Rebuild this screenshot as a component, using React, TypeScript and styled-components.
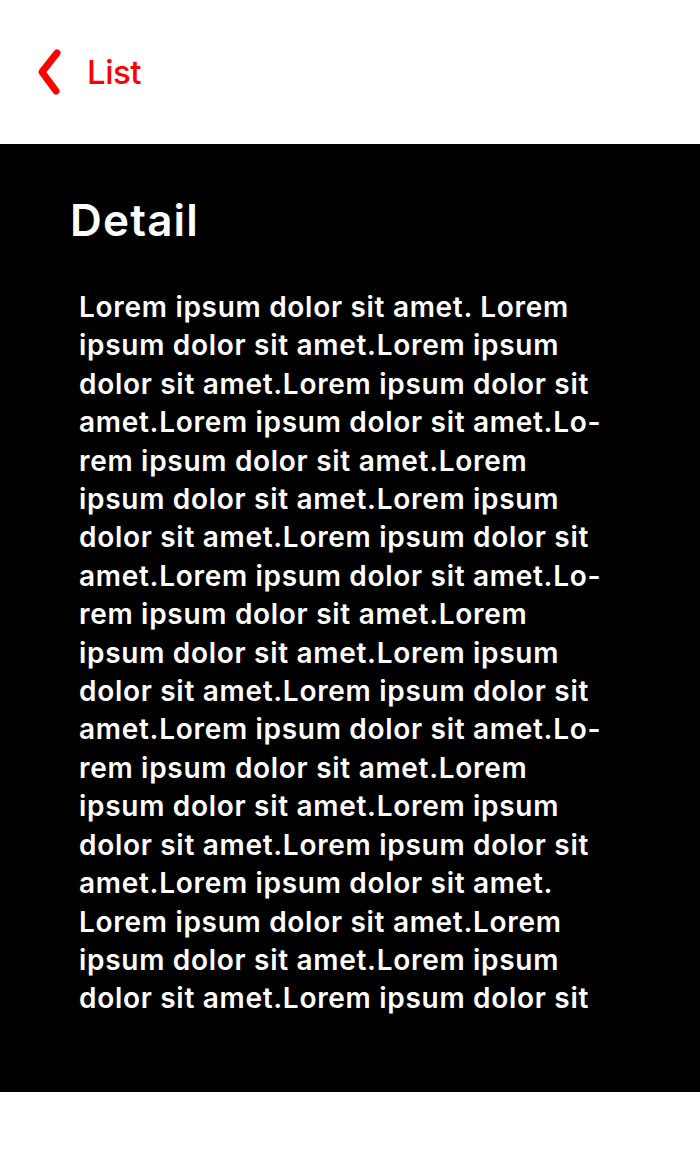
import React from 'react'
import styled, { createGlobalStyle } from 'styled-components'

const GlobalStyle = createGlobalStyle`
  html, body {
    margin: 0;
    padding: 0;
    background: #ffffff;
    font-family: Inter, "Open Sans", sans-serif;
  }
`

const Page = styled.div`
  width: 700px;
  min-height: 1168px;
  background: #ffffff;
`

const TopBar = styled.header`
  height: 144px;
  display: flex;
  align-items: center;
  padding-left: 37px;
  box-sizing: border-box;
`

const BackButton = styled.button`
  display: flex;
  align-items: center;
  gap: 24px;
  border: 0;
  padding: 0;
  background: none;
  color: #ff0000;
  font-family: Inter, sans-serif;
  font-size: 33px;
  font-weight: 500;
  letter-spacing: -0.5px;
  cursor: pointer;
`

const Panel = styled.section`
  background: #000000;
  color: #ffffff;
  padding: 48px 0 74px 0;
`

const Title = styled.h1`
  margin: 0 0 40px 70px;
  font-size: 44px;
  font-weight: 600;
  letter-spacing: 1.2px;
  line-height: 56px;
`

const Body = styled.div`
  margin-left: 79px;
  font-size: 28px;
  font-weight: 600;
  line-height: 38.4px;
  letter-spacing: 0.7px;
`

const Line = styled.div`
  white-space: nowrap;
`

const ChevronLeft = () => (
  <svg width="26" height="48" viewBox="0 0 26 48" fill="none">
    <polyline
      points="20,5 5,24 19,43"
      stroke="#ff0000"
      strokeWidth="7"
      strokeLinecap="round"
      strokeLinejoin="round"
    />
  </svg>
)

const lines = [
  'Lorem ipsum dolor sit amet. Lorem',
  'ipsum dolor sit amet.Lorem ipsum',
  'dolor sit amet.Lorem ipsum dolor sit',
  'amet.Lorem ipsum dolor sit amet.Lo-',
  'rem ipsum dolor sit amet.Lorem',
  'ipsum dolor sit amet.Lorem ipsum',
  'dolor sit amet.Lorem ipsum dolor sit',
  'amet.Lorem ipsum dolor sit amet.Lo-',
  'rem ipsum dolor sit amet.Lorem',
  'ipsum dolor sit amet.Lorem ipsum',
  'dolor sit amet.Lorem ipsum dolor sit',
  'amet.Lorem ipsum dolor sit amet.Lo-',
  'rem ipsum dolor sit amet.Lorem',
  'ipsum dolor sit amet.Lorem ipsum',
  'dolor sit amet.Lorem ipsum dolor sit',
  'amet.Lorem ipsum dolor sit amet.',
  'Lorem ipsum dolor sit amet.Lorem',
  'ipsum dolor sit amet.Lorem ipsum',
  'dolor sit amet.Lorem ipsum dolor sit',
]

const App: React.FC = () => {
  return (
    <Page>
      <GlobalStyle />
      <TopBar>
        <BackButton>
          <ChevronLeft />
          List
        </BackButton>
      </TopBar>
      <Panel>
        <Title>Detail</Title>
        <Body>
          {lines.map((text, i) => (
            <Line key={i}>{text}</Line>
          ))}
        </Body>
      </Panel>
    </Page>
  )
}

export default App
